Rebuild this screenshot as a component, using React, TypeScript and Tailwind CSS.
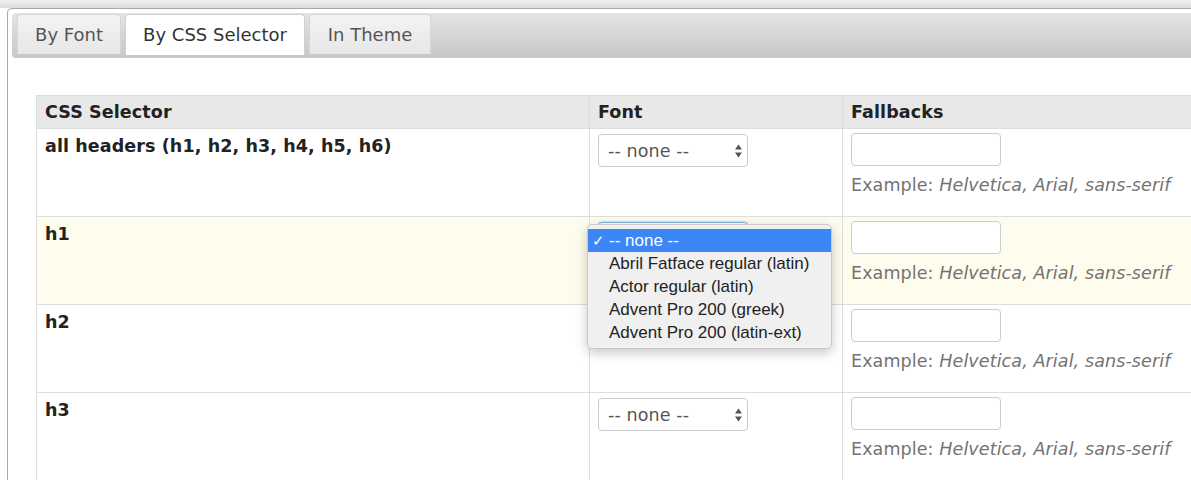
const rows = [
  { label: "all headers (h1, h2, h3, h4, h5, h6)", highlight: false, focused: false },
  { label: "h1", highlight: true, focused: true },
  { label: "h2", highlight: false, focused: false },
  { label: "h3", highlight: false, focused: false },
];

const menuItems = [
  "-- none --",
  "Abril Fatface regular (latin)",
  "Actor regular (latin)",
  "Advent Pro 200 (greek)",
  "Advent Pro 200 (latin-ext)",
];

function FontSelect({ focused }: { focused?: boolean }) {
  return (
    <div
      className={`flex h-[33px] w-[150px] items-center justify-between rounded-[4px] border bg-white pl-[9px] pr-[5px] text-[#555] ${
        focused ? "border-[#7db0ea] shadow-[0_0_3px_rgba(102,175,233,0.6)]" : "border-[#cccccc]"
      }`}
    >
      <span>-- none --</span>
      <svg width="7" height="14" viewBox="0 0 7 14">
        <path d="M3.5 0.5 L7 5.5 H0 Z" fill="#555" />
        <path d="M0 8.5 H7 L3.5 13.5 Z" fill="#555" />
      </svg>
    </div>
  );
}

function Fallback() {
  return (
    <div>
      <div className="h-[33px] w-[150px] rounded-[4px] border border-[#cccccc] bg-white" />
      <p className="mt-[7px] whitespace-nowrap text-[#737373]">
        Example: <em>Helvetica, Arial, sans-serif</em>
      </p>
    </div>
  );
}

function Tab({ label, active, width }: { label: string; active?: boolean; width: string }) {
  return (
    <div
      className={`flex items-center justify-center rounded-t-[4px] border border-b-0 text-[18px] tracking-normal ${width} ${
        active
          ? "h-[41px] border-[#cfcfcf] bg-white text-[#333]"
          : "h-[40px] border-[#d6d6d6] bg-linear-to-b from-[#f3f3f3] to-[#e7e7e7] text-[#555]"
      }`}
    >
      {label}
    </div>
  );
}

export default function App() {
  return (
    <div className="relative h-[480px] w-[1191px] overflow-hidden bg-white text-[17.5px] leading-[24px] tracking-[0.1px] text-[#222] [font-family:'DejaVu_Sans',Verdana,sans-serif]">
      <div className="h-[8px] bg-linear-to-b from-[#f2f2f2] to-[#dcdcdc]" />

      <div className="pl-[7px]">
        <div className="rounded-tl-[5px] border-l border-t border-[#a8a8a8] pl-[4px] pt-[4px]">
          <div className="flex h-[45px] gap-[4px] rounded-l-[4px] bg-linear-to-b from-[#e4e4e4] to-[#c7c7c7] pl-[5px] pt-[1px]">
            <Tab label="By Font" width="w-[104px]" />
            <Tab label="By CSS Selector" width="w-[180px]" active />
            <Tab label="In Theme" width="w-[122px]" />
          </div>

          <div className="pl-[24px] pt-[37px]">
            <div className="border-l border-t border-[#dddddd]">
              <div className="flex h-[33px] border-b border-[#dddddd] bg-[#e8e8e8] font-bold">
                <div className="w-[553px] border-r border-[#dddddd] px-[8px] py-[4px]">CSS Selector</div>
                <div className="w-[253px] border-r border-[#dddddd] px-[8px] py-[4px]">Font</div>
                <div className="flex-1 px-[8px] py-[4px]">Fallbacks</div>
              </div>

              {rows.map((row) => (
                <div
                  key={row.label}
                  className={`flex h-[88px] border-b border-[#dddddd] ${row.highlight ? "bg-[#fefcec]" : "bg-white"}`}
                >
                  <div className="w-[553px] border-r border-[#dddddd] px-[8px] pt-[5px] font-bold">{row.label}</div>
                  <div className="w-[253px] border-r border-[#dddddd] px-[8px] pt-[5px]">
                    <FontSelect focused={row.focused} />
                  </div>
                  <div className="flex-1 px-[8px] pt-[4px]">
                    <Fallback />
                  </div>
                </div>
              ))}
            </div>
          </div>
        </div>
      </div>

      <div className="absolute left-[587px] top-[224px] w-[245px] rounded-[5px] border border-[#c9c9c9] bg-[#f0f0f0] py-[4px] text-[17px] leading-[23px] tracking-normal text-[#222] shadow-[0_4px_12px_rgba(0,0,0,0.22)] [font-family:'Liberation_Sans',Arial,sans-serif]">
        {menuItems.map((item, i) => (
          <div
            key={item}
            className={`flex h-[23px] items-center ${i === 0 ? "bg-[#3d86f6] text-white" : ""}`}
          >
            <span className="w-[21px] pl-[4px] text-[15px]">{i === 0 ? "✓" : ""}</span>
            <span>{item}</span>
          </div>
        ))}
      </div>
    </div>
  );
}
